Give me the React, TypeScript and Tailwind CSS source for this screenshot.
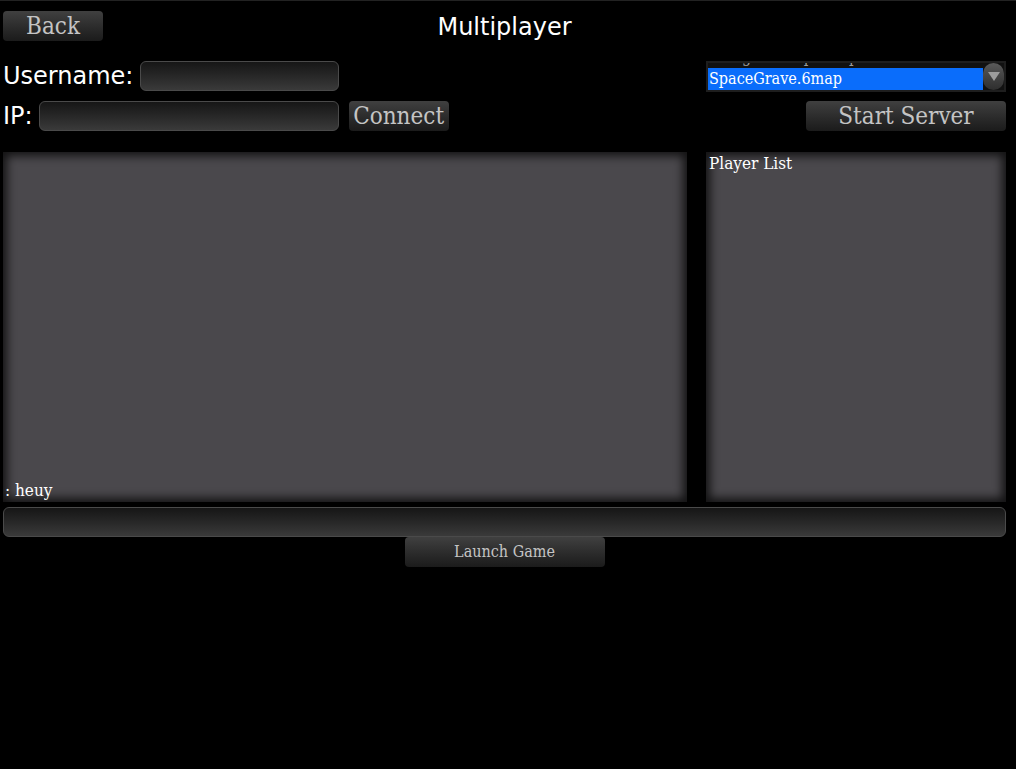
import React from "react";

const serif = "font-['DejaVu_Serif_Condensed','DejaVu_Serif',serif]";
const sans = "font-['DejaVu_Sans',sans-serif]";

function GameButton(props: { label: string; className?: string }) {
  return (
    <button
      type="button"
      className={
        "flex items-center justify-center rounded-[4px] bg-gradient-to-b from-[#404040] to-[#1b1b1b] text-[#c4c4c4] leading-none " +
        serif +
        " " +
        (props.className ?? "")
      }
    >
      {props.label}
    </button>
  );
}

function TextBox(props: { className?: string }) {
  return (
    <div
      className={
        "rounded-[6px] border border-[#4a4a4a] bg-gradient-to-b from-[#161616] to-[#3a3a3a] " +
        (props.className ?? "")
      }
    />
  );
}

function Panel(props: { className?: string; children?: React.ReactNode }) {
  return (
    <div
      className={
        "bg-[#4a484c] shadow-[inset_0_0_10px_4px_rgba(0,0,0,0.75)] " + (props.className ?? "")
      }
    >
      {props.children}
    </div>
  );
}

export default function App() {
  return (
    <div className="h-[769px] w-[1016px] overflow-hidden border-t border-[#222] bg-black text-white">
      <div className="flex flex-col pl-[3px] pr-[10px]">
        {/* header */}
        <div className="mt-[10px] grid h-[30px] grid-cols-[1fr_auto_1fr] items-center">
          <GameButton label="Back" className="h-[30px] w-[100px] self-start text-[24px]" />
          <div className={"mt-[1px] text-[24px] leading-none " + sans}>Multiplayer</div>
          <div />
        </div>

        {/* username + map list */}
        <div className="mt-[20px] flex h-[30px] items-center justify-between">
          <div className="flex items-center">
            <span className={"text-[24px] leading-none " + sans}>Username:</span>
            <TextBox className="ml-[7px] h-[30px] w-[199px]" />
          </div>
          <div className="flex h-[31px] w-[300px] items-start overflow-hidden border-2 border-[#1e1e1e] bg-[#111]">
            <div className={"flex w-[276px] flex-col text-[16px] leading-[22px] " + serif}>
              <div className="-mt-[17px] h-[22px] pl-[2px] text-[#9a9a9a]">Designer Map.6map</div>
              <div className="h-[22px] bg-[#0a6dfb] pl-[1px] text-white">SpaceGrave.6map</div>
            </div>
            <div className="flex h-[27px] w-[21px] items-center justify-center rounded-full bg-gradient-to-b from-[#5a5a5a] to-[#2e2e2e]">
              <svg width="14" height="12" viewBox="0 0 14 12">
                <path d="M1 2 L13 2 L7 11 Z" fill="#9c9c9c" />
              </svg>
            </div>
          </div>
        </div>

        {/* ip + connect + start server */}
        <div className="mt-[10px] flex h-[30px] items-center justify-between">
          <div className="flex items-center">
            <span className={"text-[24px] leading-none " + sans}>IP:</span>
            <TextBox className="ml-[6px] h-[30px] w-[300px]" />
            <GameButton label="Connect" className="ml-[10px] h-[30px] w-[100px] text-[24px]" />
          </div>
          <GameButton label="Start Server" className="h-[30px] w-[200px] text-[24px]" />
        </div>

        {/* panels */}
        <div className="mt-[21px] flex h-[350px] justify-between">
          <Panel className="flex w-[684px] flex-col justify-end px-[2px] pb-[2px]">
            <div className={"text-[17px] leading-[20px] " + serif}>: heuy</div>
          </Panel>
          <Panel className="w-[300px] px-[3px] pt-[1px]">
            <div className={"text-[17px] leading-[20px] " + serif}>Player List</div>
          </Panel>
        </div>

        {/* chat input */}
        <TextBox className="mt-[5px] h-[30px] w-full" />

        {/* launch */}
        <div className="flex justify-center">
          <GameButton label="Launch Game" className="h-[30px] w-[200px] text-[16px]" />
        </div>
      </div>
    </div>
  );
}
